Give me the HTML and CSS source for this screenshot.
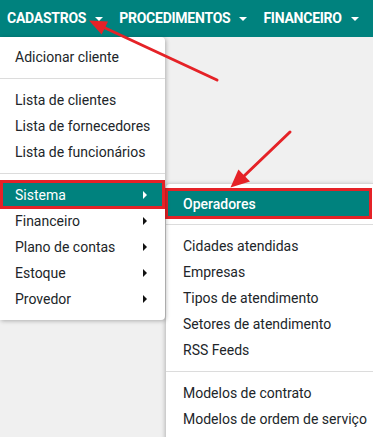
FILE: index.html
```html
<!DOCTYPE html>
<html lang="pt-BR">
<head>
<meta charset="utf-8">
<title>Menu Cadastros</title>
<link rel="stylesheet" href="styles.css">
</head>
<body>
<nav class="navbar">
  <a class="nav-link">CADASTROS<span class="caret"></span></a>
  <a class="nav-link">PROCEDIMENTOS<span class="caret"></span></a>
  <a class="nav-link">FINANCEIRO<span class="caret"></span></a>
</nav>
<div class="menus">
  <ul class="dropdown">
    <li class="item">Adicionar cliente</li>
    <li class="divider"></li>
    <li class="item">Lista de clientes</li>
    <li class="item">Lista de fornecedores</li>
    <li class="item">Lista de funcionários</li>
    <li class="divider"></li>
    <li class="item has-sub active-main">Sistema<span class="arrow"></span></li>
    <li class="item has-sub">Financeiro<span class="arrow"></span></li>
    <li class="item has-sub">Plano de contas<span class="arrow"></span></li>
    <li class="item has-sub">Estoque<span class="arrow"></span></li>
    <li class="item has-sub">Provedor<span class="arrow"></span></li>
  </ul>
  <ul class="submenu">
    <li class="item active-sub">Operadores</li>
    <li class="divider"></li>
    <li class="item">Cidades atendidas</li>
    <li class="item">Empresas</li>
    <li class="item">Tipos de atendimento</li>
    <li class="item">Setores de atendimento</li>
    <li class="item">RSS Feeds</li>
    <li class="divider"></li>
    <li class="item">Modelos de contrato</li>
    <li class="item">Modelos de ordem de serviço</li>
  </ul>
</div>
<svg class="annotations" width="373" height="437" viewBox="0 0 373 437">
  <line x1="217" y1="80" x2="103" y2="27" stroke="#e52227" stroke-width="3" stroke-linecap="round"/>
  <polygon points="89,20.5 108,21.4 101.6,34.5" fill="#e52227"/>
  <line x1="290" y1="132" x2="243" y2="177" stroke="#e52227" stroke-width="3" stroke-linecap="round"/>
  <polygon points="230.5,187.5 250,181.6 238.4,169.4" fill="#e52227"/>
</svg>
</body>
</html>
```
FILE: styles.css
```css
html, body {
  margin: 0;
  padding: 0;
  overflow: hidden;
}
body {
  background: #f0f0f0;
  font-family: Roboto, "Liberation Sans", Arial, sans-serif;
  font-size: 14px;
  color: #212529;
  height: 437px;
  position: relative;
}
.navbar {
  display: flex;
  align-items: center;
  height: 37px;
  background: #00827e;
}
.nav-link {
  display: flex;
  align-items: center;
  padding: 0 8px;
  color: #fff;
  font-weight: 700;
  font-size: 14px;
  letter-spacing: -0.25px;
  line-height: 37px;
}
.nav-link:first-child {
  padding-left: 7px;
}
.caret {
  display: inline-block;
  margin-left: 9px;
  width: 0;
  height: 0;
  border-top: 4px solid #fff;
  border-left: 4px solid transparent;
  border-right: 4px solid transparent;
}
.menus {
  display: flex;
  align-items: flex-start;
}
ul {
  list-style: none;
  margin: 0;
  padding: 0;
}
.dropdown {
  width: 165px;
  background: #fff;
  padding: 7px 0 8px;
  border-radius: 0 4px 4px 0;
  box-shadow: 1px 1px 4px rgba(0, 0, 0, 0.28);
  position: relative;
  z-index: 1;
}
.submenu {
  width: 207px;
  margin-top: 146px;
  margin-left: 1px;
  background: #fff;
  padding: 6px 0 8px;
  border-top: 1px solid #d6d6d6;
  border-radius: 4px 0 0 0;
  box-shadow: -1px 1px 4px rgba(0, 0, 0, 0.25);
}
.item {
  display: flex;
  align-items: center;
  justify-content: space-between;
  height: 26px;
  line-height: 18px;
  padding: 0 15px;
  white-space: nowrap;
}
.submenu .item {
  padding: 0 17px;
}
.divider {
  height: 1px;
  background: #dcdcdc;
  margin: 8px 0;
}
.arrow {
  display: inline-block;
  width: 0;
  height: 0;
  margin-right: 3px;
  border-left: 4px solid #111;
  border-top: 4px solid transparent;
  border-bottom: 4px solid transparent;
}
.active-main {
  height: 29px;
  margin: -2px 0 -1px;
  background: #00827e;
  color: #fff;
  box-shadow: inset 0 0 0 3px #e52227;
}
.active-main .arrow {
  border-left-color: #fff;
}
.submenu .active-sub {
  height: 31px;
  margin: -2px 1px -3px -1px;
  padding-left: 18px;
  background: #00827e;
  color: #fff;
  font-weight: 500;
  box-shadow: inset 0 0 0 3px #e52227;
}
.annotations {
  position: absolute;
  left: 0;
  top: 0;
  pointer-events: none;
  z-index: 5;
}
```
